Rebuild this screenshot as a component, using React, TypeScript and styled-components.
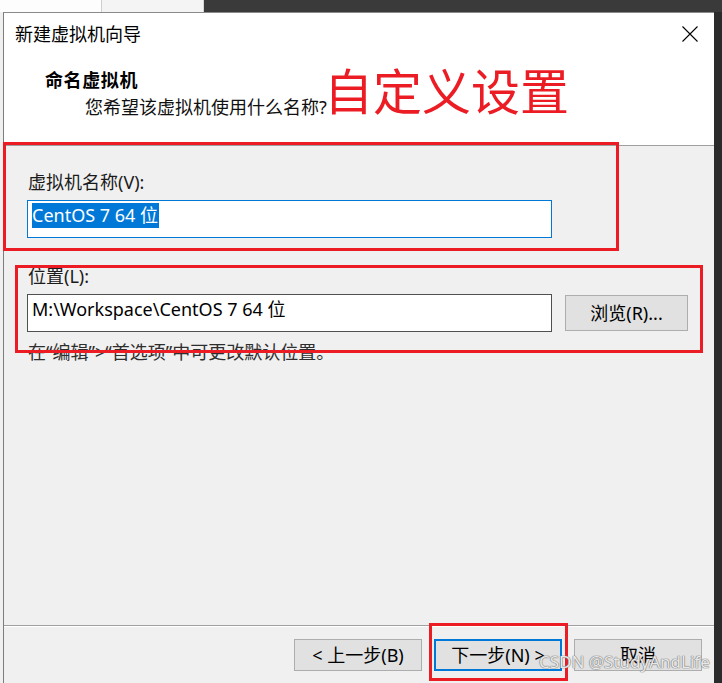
import React from "react";
import styled, { createGlobalStyle, css } from "styled-components";

const GlobalStyle = createGlobalStyle`
  html, body {
    margin: 0;
    padding: 0;
    background: #3c3c3c;
  }
  * {
    box-sizing: border-box;
  }
  body {
    font-family: "Noto Sans", "Noto Sans CJK SC", sans-serif;
    -webkit-font-smoothing: antialiased;
  }
`;

const UI_FONT = `"Noto Sans", "Noto Sans CJK SC", sans-serif`;
const RED = "#ec1c24";
const ACCENT = "#0078d7";

export default function App() {
  return (
    <Screen>
      <GlobalStyle />
      <TopStrip>
        <OtherWindow>
          <OtherPane />
          <OtherPane />
        </OtherWindow>
        <Desktop />
      </TopStrip>

      <Main>
        <BehindEdge />
        <Dialog>
          <Header>
            <TitleBar>
              <Title>新建虚拟机向导</Title>
              <CloseButton aria-label="close">
                <svg width="16" height="16" viewBox="0 0 16 16">
                  <path d="M0.5 0.5 L15.5 15.5 M15.5 0.5 L0.5 15.5" stroke="#000" strokeWidth="1.1" fill="none" />
                </svg>
              </CloseButton>
            </TitleBar>
            <Heading>命名虚拟机</Heading>
            <Subtitle>您希望该虚拟机使用什么名称?</Subtitle>
          </Header>

          <Body>
            <FieldLabel>虚拟机名称(V):</FieldLabel>
            <TextBox $focused>
              <Selected>CentOS 7 64 位</Selected>
            </TextBox>

            <FieldLabel $spaced>位置(L):</FieldLabel>
            <FieldRow>
              <TextBox>M:\Workspace\CentOS 7 64 位</TextBox>
              <Button $width={123} $height={36}>浏览(R)...</Button>
            </FieldRow>
            <Hint>在“编辑”&gt;“首选项”中可更改默认位置。</Hint>
          </Body>

          <Footer>
            <Button>&lt; 上一步(B)</Button>
            <Button $default>下一步(N) &gt;</Button>
            <Button>取消</Button>
          </Footer>
        </Dialog>
        <DarkEdge />
      </Main>

      <Callout>自定义设置</Callout>
      <MarkBox $left={3} $top={142} $w={616} $h={109} />
      <MarkBox $left={15} $top={265} $w={688} $h={88} />
      <MarkBox $left={429} $top={623} $w={139} $h={58} />
      <Watermark>CSDN @StudyAndLife</Watermark>
    </Screen>
  );
}

const Screen = styled.div`
  position: relative;
  width: 722px;
  height: 683px;
  overflow: hidden;
  display: flex;
  flex-direction: column;
`;

const TopStrip = styled.div`
  height: 12px;
  display: flex;
`;

const OtherWindow = styled.div`
  width: 204px;
  display: flex;
  background: #f7f7f7;
  border-right: 1px solid #d6d6d6;
`;

const OtherPane = styled.div`
  flex: 1;
  background: #fdfdfd;
  & + & {
    border-left: 1px solid #cfcfcf;
    background: #f4f4f4;
  }
`;

const Desktop = styled.div`
  flex: 1;
  background: #3a3a3a;
`;

const Main = styled.div`
  flex: 1;
  display: flex;
  min-height: 0;
`;

const BehindEdge = styled.div`
  width: 3px;
  background: #f0f0f0;
`;

const DarkEdge = styled.div`
  width: 8px;
  background: #2b2b2b;
`;

const Dialog = styled.div`
  flex: 1;
  display: flex;
  flex-direction: column;
  border-left: 1px solid #7d7d7d;
  border-top: 1px solid #8a8a8a;
  background: #f0f0f0;
  font-family: ${UI_FONT};
  font-size: 18px;
  color: #000;
`;

const Header = styled.div`
  height: 133px;
  background: #fff;
  border-bottom: 1px solid #a0a0a0;
  display: flex;
  flex-direction: column;
`;

const TitleBar = styled.div`
  height: 44px;
  display: flex;
  align-items: center;
  justify-content: space-between;
  padding: 0 16px 2px 11px;
`;

const Title = styled.div`
  line-height: 22px;
`;

const CloseButton = styled.div`
  width: 16px;
  height: 16px;
  display: flex;
  svg {
    display: block;
  }
`;

const Heading = styled.div`
  margin: 12px 0 0 41px;
  line-height: 22px;
  font-weight: 700;
  letter-spacing: 0.6px;
`;

const Subtitle = styled.div`
  margin: 5px 0 0 81px;
  line-height: 22px;
  color: #111;
`;

const Body = styled.div`
  flex: 1;
  display: flex;
  flex-direction: column;
  align-items: flex-start;
  padding: 26px 0 0 23px;
`;

const FieldLabel = styled.div<{ $spaced?: boolean }>`
  line-height: 20px;
  color: #1b1b1b;
  margin: ${(p) => (p.$spaced ? "28px 0 8px" : "0 0 8px")};
  padding-left: 1px;
`;

const TextBox = styled.div<{ $focused?: boolean }>`
  width: 525px;
  height: 38px;
  display: flex;
  align-items: flex-start;
  padding: 2px 4px;
  background: #fff;
  border: 1px solid ${(p) => (p.$focused ? ACCENT : "#505050")};
  line-height: 25px;
  white-space: nowrap;
  color: #000;
`;

const Selected = styled.span`
  background: ${ACCENT};
  color: #fff;
  padding-right: 1px;
`;

const FieldRow = styled.div`
  display: flex;
  align-items: center;
  gap: 13px;
`;

const Hint = styled.div`
  margin-top: 10px;
  line-height: 20px;
  color: #2e2e2e;
  padding-left: 1px;
`;

const Footer = styled.div`
  height: 58px;
  display: flex;
  justify-content: flex-end;
  align-items: flex-start;
  gap: 12px;
  padding: 13px 12px 0 0;
  border-top: 1px solid #a0a0a0;
  box-shadow: inset 0 1px 0 #fff;
`;

const Button = styled.div<{ $default?: boolean; $width?: number; $height?: number }>`
  width: ${(p) => p.$width ?? 128}px;
  height: ${(p) => p.$height ?? 32}px;
  display: flex;
  align-items: center;
  justify-content: center;
  padding-bottom: 2px;
  background: #e1e1e1;
  border: 1px solid #adadad;
  color: #000;
  white-space: nowrap;
  ${(p) =>
    p.$default &&
    css`
      border: 2px solid ${ACCENT};
    `}
`;

const Callout = styled.div`
  position: absolute;
  left: 324px;
  top: 64px;
  font-family: "Noto Sans CJK SC", sans-serif;
  font-size: 49px;
  line-height: 49px;
  color: ${RED};
`;

const MarkBox = styled.div<{ $left: number; $top: number; $w: number; $h: number }>`
  position: absolute;
  left: ${(p) => p.$left}px;
  top: ${(p) => p.$top}px;
  width: ${(p) => p.$w}px;
  height: ${(p) => p.$h}px;
  border: 3px solid ${RED};
  pointer-events: none;
`;

const Watermark = styled.div`
  position: absolute;
  left: 539px;
  top: 651px;
  font-family: "Noto Sans", sans-serif;
  font-size: 17px;
  line-height: 22px;
  color: rgba(255, 255, 255, 0.85);
  text-shadow: 0 0 1px #777, 0 0 1px #777, 0 0 1px #888;
  white-space: nowrap;
`;
